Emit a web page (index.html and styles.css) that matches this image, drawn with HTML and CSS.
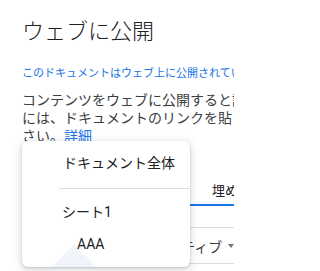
FILE: index.html
```html
<!DOCTYPE html>
<html lang="ja">
<head>
<meta charset="utf-8">
<link rel="stylesheet" href="styles.css">
</head>
<body>
<div class="frame">
  <div class="dialog">
    <h1 class="title">ウェブに公開</h1>
    <a class="status" href="#">このドキュメントはウェブ上に公開されてい</a>
    <div class="desc">
      <div class="line">コンテンツをウェブに公開すると誰</div>
      <div class="line">には、ドキュメントのリンクを貼り</div>
      <div class="line">さい。<a class="more" href="#">詳細</a></div>
    </div>
    <div class="tabs">
      <div class="tab tab-link">リンク</div>
      <div class="tab tab-active">埋め</div>
    </div>
    <div class="selects">
      <div class="select">
        <span class="select-text">ラクティブ</span>
        <span class="caret"></span>
      </div>
    </div>
  </div>

  <div class="menu">
    <svg class="ghost" width="44" height="23" viewBox="0 0 44 23">
      <defs>
        <pattern id="dots" width="2" height="2" patternUnits="userSpaceOnUse">
          <rect width="2" height="2" fill="#f3f6fb"/>
          <rect width="1" height="1" fill="#e6edf7"/>
        </pattern>
      </defs>
      <polygon points="22,0 44,23 0,23" fill="url(#dots)"/>
    </svg>
    <div class="item item-doc">ドキュメント全体</div>
    <div class="divider"></div>
    <div class="item item-sheet">シート1</div>
    <div class="item item-range">AAA</div>
  </div>
</div>
</body>
</html>
```

FILE: styles.css
```css
html, body {
  margin: 0;
  padding: 0;
  background: #ffffff;
}

body {
  font-family: Roboto, "Noto Sans CJK JP", sans-serif;
  color: #3c4043;
}

.frame {
  position: relative;
  width: 234px;
  height: 271px;
  overflow: hidden;
}

.dialog {
  padding: 18px 0 0 22px;
  white-space: nowrap;
}

.title {
  margin: 0;
  font-size: 22px;
  line-height: 28px;
  font-weight: 300;
  color: #202124;
}

.status {
  display: block;
  margin-top: 20px;
  font-size: 11px;
  line-height: 16px;
  color: #1a73e8;
  text-decoration: none;
}

.desc {
  margin-top: 9px;
  font-size: 14px;
  line-height: 18px;
  color: #3c4043;
}

.more {
  color: #1a73e8;
  text-decoration: none;
}

.tabs {
  display: flex;
  margin-top: 37px;
  font-size: 13px;
  line-height: 18px;
  color: #202124;
}

.tab {
  flex-shrink: 0;
  padding-bottom: 4px;
  border-bottom: 2px solid transparent;
}

.tab-link {
  width: 168px;
}

.tab-active {
  padding-left: 22px;
  padding-right: 10px;
  border-bottom-color: #1a73e8;
}

.selects {
  margin-top: 21px;
}

.select {
  display: flex;
  align-items: center;
  width: 110px;
  margin-left: 120px;
  height: 35px;
  padding-left: 10px;
  border: 1px solid #dadce0;
  font-size: 14px;
  color: #3c4043;
}

.caret {
  flex-shrink: 0;
  margin-left: 6px;
  width: 0;
  height: 0;
  border-left: 3px solid transparent;
  border-right: 3px solid transparent;
  border-top: 4px solid #757575;
}

.menu {
  position: absolute;
  left: 22px;
  top: 141px;
  width: 168px;
  height: 126px;
  box-sizing: border-box;
  padding-top: 6px;
  background: #ffffff;
  border-radius: 6px;
  box-shadow: 0 1px 3px rgba(60, 64, 67, 0.25), 0 3px 8px 2px rgba(60, 64, 67, 0.12);
  font-size: 14px;
  line-height: 32px;
  color: #202124;
  white-space: nowrap;
}

.ghost {
  position: absolute;
  left: 30px;
  top: 103px;
  display: block;
}

.item {
  position: relative;
}

.item-doc {
  padding-left: 41px;
}

.divider {
  margin: 9px 0 7px 37px;
  height: 1px;
  background: #dadce0;
}

.item-sheet {
  padding-left: 40px;
}

.item-range {
  padding-left: 55px;
}
```
